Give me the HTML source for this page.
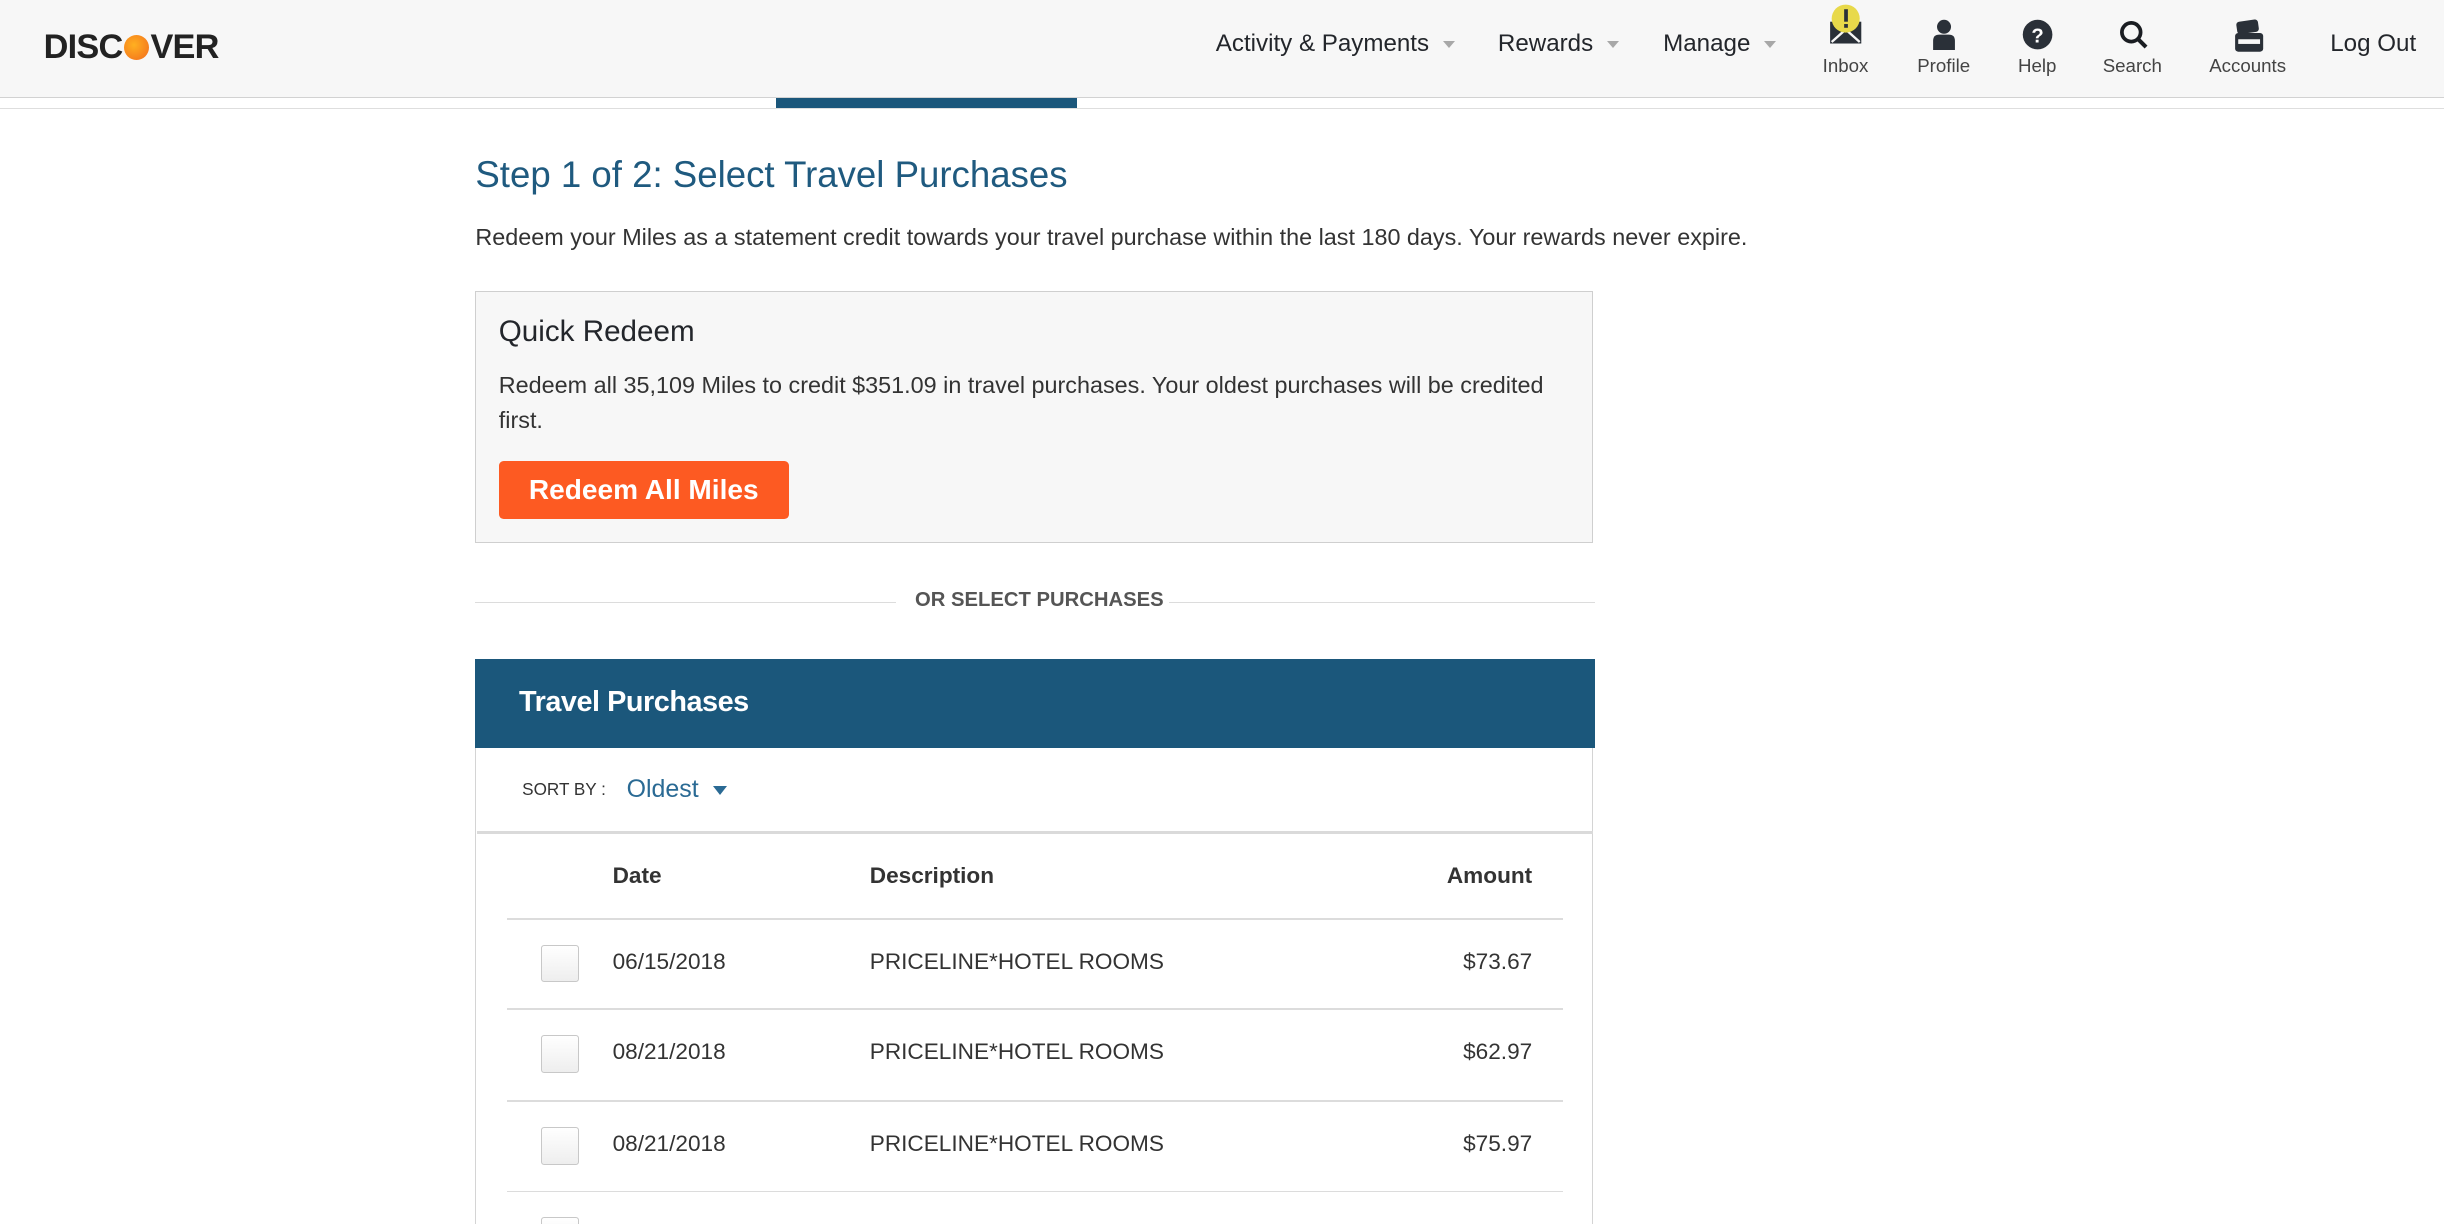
<!DOCTYPE html>
<html><head><meta charset="utf-8">
<style>
html{zoom:1.5587;overflow:hidden;height:785px}
body{margin:0;width:1568px;height:785px;overflow:hidden;background:#fff;font-family:"Liberation Sans",sans-serif;color:#23262b;position:relative}
.a{position:absolute;white-space:nowrap}
.hdr{position:absolute;left:0;top:0;width:1568px;height:62px;background:#f7f7f7;border-bottom:1px solid #d2d2d2}
.nav{font-size:15.5px;color:#23262b;transform:translateY(-50%)}
.car{display:inline-block;width:0;height:0;border-left:4px solid transparent;border-right:4px solid transparent;border-top:5px solid #a8a8a8;margin-left:9px;vertical-align:middle}
.lbl{font-size:12px;color:#444;transform:translateX(-50%)}
.row{position:absolute;left:325px;width:678px;height:1px;background:#dcdcdc}
.cb{position:absolute;left:347px;width:23px;height:23px;border:1px solid #c8c8c8;background:linear-gradient(#fff,#eee);border-radius:2px}
.cell{font-size:14.5px;color:#333;transform:translateY(-50%)}
</style></head><body>
<div class="hdr"></div>
<div class="a" style="left:0;top:69px;width:1568px;height:1px;background:#dedede"></div>
<div class="a" style="left:498px;top:63px;width:193px;height:6px;background:#1b577b"></div>
<div class="a" style="left:28px;top:18px;font-size:22px;font-weight:bold;letter-spacing:-0.5px;color:#222">DISC<span style="display:inline-block;width:16px;height:16px;border-radius:50%;background:radial-gradient(circle at 40% 40%,#ffb020,#f26b1d);vertical-align:-1px;margin:0 1px"></span>VER</div>
<div class="a nav" style="left:780px;top:28px">Activity &amp; Payments<span class="car"></span></div>
<div class="a nav" style="left:961px;top:28px">Rewards<span class="car"></span></div>
<div class="a nav" style="left:1067px;top:28px">Manage<span class="car"></span></div>
<div class="a nav" style="left:1495px;top:28px">Log Out</div>
<svg class="a" style="left:1172px;top:2px" width="26" height="28" viewBox="0 0 26 28"><rect x="2" y="12" width="20" height="14" fill="#2a3038"/><path d="M3 25 L12 17 L21 25" stroke="#f7f7f7" stroke-width="1.5" fill="none"/><circle cx="12" cy="10" r="9" fill="#e8d94a"/><rect x="11" y="4" width="2.4" height="8" fill="#2a3038"/><rect x="11" y="13.5" width="2.4" height="2.4" fill="#2a3038"/></svg>
<svg class="a" style="left:1238px;top:12px" width="18" height="20" viewBox="0 0 18 20"><circle cx="9" cy="5" r="4.5" fill="#2a3038"/><path d="M2 20 V14 Q2 10 6 10 H12 Q16 10 16 14 V20Z" fill="#2a3038"/></svg>
<svg class="a" style="left:1297px;top:12px" width="20" height="20" viewBox="0 0 20 20"><circle cx="10" cy="10" r="9.5" fill="#2a3038"/><text x="10" y="15" font-size="13" font-weight="bold" fill="#fff" text-anchor="middle" font-family="Liberation Sans">?</text></svg>
<svg class="a" style="left:1359px;top:12px" width="20" height="20" viewBox="0 0 20 20"><circle cx="8.5" cy="8.5" r="6" stroke="#1a1d22" stroke-width="2.4" fill="none"/><path d="M13 13 L18 18" stroke="#1a1d22" stroke-width="2.6"/></svg>
<svg class="a" style="left:1432px;top:12px" width="22" height="22" viewBox="0 0 22 22"><rect x="3" y="1" width="14" height="8" rx="2" fill="#2a3038" transform="rotate(-8 10 5)"/><rect x="2" y="9" width="18" height="12" rx="2" fill="#2a3038"/><rect x="4" y="13" width="14" height="3" fill="#f7f7f7"/></svg>
<div class="a lbl" style="left:1184px;top:35px">Inbox</div>
<div class="a lbl" style="left:1247px;top:35px">Profile</div>
<div class="a lbl" style="left:1307px;top:35px">Help</div>
<div class="a lbl" style="left:1368px;top:35px">Search</div>
<div class="a lbl" style="left:1442px;top:35px">Accounts</div>

<div class="a" style="left:305px;top:99px;font-size:23.5px;color:#1f5a7f">Step 1 of 2: Select Travel Purchases</div>
<div class="a" style="left:305px;top:144px;font-size:15px;color:#333">Redeem your Miles as a statement credit towards your travel purchase within the last 180 days. Your rewards never expire.</div>

<div class="a" style="left:305px;top:187px;width:716px;height:160px;background:#f7f7f7;border:1px solid #cfcfcf"></div>
<div class="a" style="left:320px;top:202px;font-size:19px;color:#23262b">Quick Redeem</div>
<div class="a" style="left:320px;top:236px;font-size:15px;color:#333;line-height:22.5px;white-space:normal;width:690px">Redeem all 35,109 Miles to credit $351.09 in travel purchases. Your oldest purchases will be credited first.</div>
<div class="a" style="left:320px;top:296px;width:186px;height:37px;background:#fd5a22;border-radius:3px;color:#fff;font-size:18px;font-weight:bold;text-align:center;line-height:37px">Redeem All Miles</div>

<div class="a" style="left:305px;top:386px;width:270px;height:1px;background:#dcdcdc"></div>
<div class="a" style="left:750px;top:386px;width:273px;height:1px;background:#dcdcdc"></div>
<div class="a" style="left:587px;top:378px;font-size:13px;font-weight:bold;color:#555">OR SELECT PURCHASES</div>

<div class="a" style="left:305px;top:423px;width:718px;height:57px;background:#1b577b"></div>
<div class="a" style="left:333px;top:440px;font-size:18.5px;font-weight:bold;color:#fff;letter-spacing:-0.3px">Travel Purchases</div>
<div class="a" style="left:305px;top:480px;width:716px;height:320px;border:1px solid #d4d4d4;border-top:none"></div>
<div class="a" style="left:306px;top:533px;width:716px;height:2px;background:#dadada"></div>
<div class="a" style="left:335px;top:500px;font-size:11px;color:#333">SORT BY :</div>
<div class="a" style="left:402px;top:497px;font-size:16px;color:#2a6a94">Oldest<span style="display:inline-block;border-left:5px solid transparent;border-right:5px solid transparent;border-top:6px solid #2a6a94;margin-left:9px;vertical-align:middle"></span></div>

<div class="a cell" style="left:393px;top:562px;font-weight:bold;color:#333">Date</div>
<div class="a cell" style="left:558px;top:562px;font-weight:bold;color:#333">Description</div>
<div class="a cell" style="right:585px;top:562px;font-weight:bold;color:#333">Amount</div>
<div class="row" style="top:589px"></div>
<div class="row" style="top:647px"></div>
<div class="row" style="top:706px"></div>
<div class="row" style="top:764px"></div>

<div class="cb" style="top:606px"></div>
<div class="a cell" style="left:393px;top:617px">06/15/2018</div>
<div class="a cell" style="left:558px;top:617px">PRICELINE*HOTEL ROOMS</div>
<div class="a cell" style="right:585px;top:617px">$73.67</div>
<div class="cb" style="top:664px"></div>
<div class="a cell" style="left:393px;top:675px">08/21/2018</div>
<div class="a cell" style="left:558px;top:675px">PRICELINE*HOTEL ROOMS</div>
<div class="a cell" style="right:585px;top:675px">$62.97</div>
<div class="cb" style="top:723px"></div>
<div class="a cell" style="left:393px;top:734px">08/21/2018</div>
<div class="a cell" style="left:558px;top:734px">PRICELINE*HOTEL ROOMS</div>
<div class="a cell" style="right:585px;top:734px">$75.97</div>
<div class="cb" style="top:781px"></div>
</body></html>
